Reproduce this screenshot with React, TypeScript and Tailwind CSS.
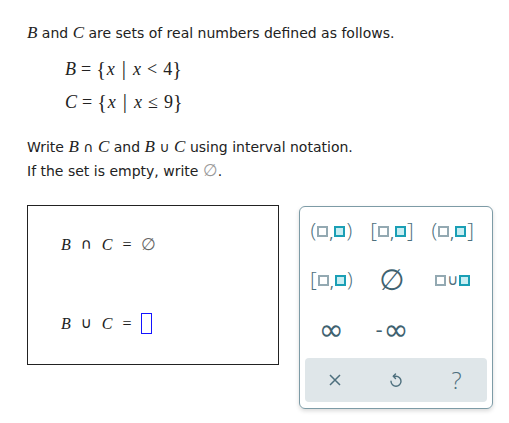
import type { ReactNode } from 'react'

const serif = "font-['Liberation_Serif','Times_New_Roman',serif]"

function M({ children }: { children: ReactNode }) {
  return <span className={`${serif} italic text-[17px]`}>{children}</span>
}

function Box({ filled }: { filled?: boolean }) {
  return filled ? (
    <span className="inline-block w-[11px] h-[11px] border-2 border-[#1a9fb5] bg-[#c8eef3]" />
  ) : (
    <span className="inline-block w-[11px] h-[11px] border-2 border-[#93a9b2] bg-white" />
  )
}

function Interval({ left, right }: { left: string; right: string }) {
  return (
    <span className="flex items-center text-[#4d6f7d] font-['Open_Sans',sans-serif] font-light">
      <span className="text-[21px] leading-none -mt-[3px] mr-[1px]">{left}</span>
      <Box />
      <span className="text-[16px] leading-none mt-[3px] mx-[1px] font-normal">,</span>
      <Box filled />
      <span className="text-[21px] leading-none -mt-[3px] ml-[1px]">{right}</span>
    </span>
  )
}

function Key({ children }: { children: ReactNode }) {
  return <div className="h-[49px] flex items-center justify-center pr-[8px]">{children}</div>
}

function SetDef({ name, rel, num }: { name: string; rel: string; num: string }) {
  return (
    <div className="flex items-center h-[33px]">
      <i>{name}</i>
      <span className="mx-[5px]">=</span>
      <span className="text-[20px] leading-none -mt-[2px]">{'{'}</span>
      <i className="ml-[1px]">x</i>
      <span className="mx-[7px] text-[21px] leading-none font-light -mt-[2px]">|</span>
      <i>x</i>
      <span className="mx-[6px]">{rel}</span>
      <span>{num}</span>
      <span className="text-[20px] leading-none -mt-[2px]">{'}'}</span>
    </div>
  )
}

function AnswerRow({ op, children }: { op: string; children: ReactNode }) {
  return (
    <div className={`${serif} text-[16px] h-[21px] flex items-center gap-[10px] text-[#222]`}>
      <i>B</i>
      <span className="font-['DejaVu_Sans',sans-serif] not-italic text-[15px]">{op}</span>
      <i>C</i>
      <span className="not-italic">=</span>
      {children}
    </div>
  )
}

export default function App() {
  return (
    <div className="w-[509px] h-[423px] bg-white text-[#222] font-['DejaVu_Sans',Verdana,sans-serif] text-[14px] pl-[27px] pt-[23px]">
      <p className="leading-[20px]">
        <M>B</M> and <M>C</M> are sets of real numbers defined as follows.
      </p>
      <div className={`${serif} text-[18px] pl-[38px] mt-[10px]`}>
        <SetDef name="B" rel="<" num="4" />
        <SetDef name="C" rel="≤" num="9" />
      </div>
      <p className="mt-[16px] leading-[23px]">
        Write <M>B</M> ∩ <M>C</M> and <M>B</M> ∪ <M>C</M> using interval notation.
      </p>
      <p className="leading-[23px]">
        If the set is empty, write <span className="text-[#999] text-[17px]">∅</span>.
      </p>
      <div className="flex items-start gap-[20px] mt-[22px]">
        <div className="w-[252px] h-[160px] shrink-0 border border-[#222] flex flex-col justify-between pl-[33px] pt-[28px] pb-[30px]">
          <AnswerRow op="∩">
            <span className="text-[#666] text-[17px]">∅</span>
          </AnswerRow>
          <AnswerRow op="∪">
            <span className="inline-block w-[11px] h-[21px] border-[1.5px] border-[#1414ff]" />
          </AnswerRow>
        </div>
        <div className="w-[194px] h-[203px] shrink-0 mt-[1px] border border-[#7d9ba6] rounded-[6px] shadow-[0_2px_4px_rgba(0,0,0,0.15)] px-[5px] pb-[5px] flex flex-col">
          <div className="grid grid-cols-3">
            <Key><Interval left="(" right=")" /></Key>
            <Key><Interval left="[" right="]" /></Key>
            <Key><Interval left="(" right="]" /></Key>
            <Key><Interval left="[" right=")" /></Key>
            <Key>
              <span className="text-[#3f6270] text-[29px] leading-none font-['DejaVu_Sans',sans-serif]">∅</span>
            </Key>
            <Key>
              <span className="flex items-center gap-[1px]">
                <Box />
                <span className="text-[#4d6f7d] text-[15px] leading-none">∪</span>
                <Box filled />
              </span>
            </Key>
            <Key>
              <span className="text-[#3f6270] text-[30px] leading-none font-['DejaVu_Sans',sans-serif]">∞</span>
            </Key>
            <Key>
              <span className="flex items-center text-[#3f6270] leading-none font-['DejaVu_Sans',sans-serif]">
                <span className="text-[20px] mr-[1px]">-</span>
                <span className="text-[30px]">∞</span>
              </span>
            </Key>
            <div />
          </div>
          <div className="mt-[4px] h-[44px] bg-[#dfe6e9] rounded-[4px] grid grid-cols-3 items-center text-[#4d6f7d]">
            <div className="flex justify-center">
              <svg width="14" height="14" viewBox="0 0 14 14" stroke="currentColor" strokeWidth="1.5" fill="none">
                <path d="M2 2L12 12M12 2L2 12" />
              </svg>
            </div>
            <div className="flex justify-center">
              <svg width="14" height="16" viewBox="0 0 14 16" stroke="currentColor" strokeWidth="1.4" fill="none" strokeLinecap="round" strokeLinejoin="round">
                <path d="M6.5 2L4.3 4.3L6.5 6.6" />
                <path d="M4.5 4.3H7A5 5 0 1 1 2 9.3" />
              </svg>
            </div>
            <div className="flex justify-center">
              <span className="text-[24px] font-['Open_Sans',sans-serif] font-light leading-none">?</span>
            </div>
          </div>
        </div>
      </div>
    </div>
  )
}
